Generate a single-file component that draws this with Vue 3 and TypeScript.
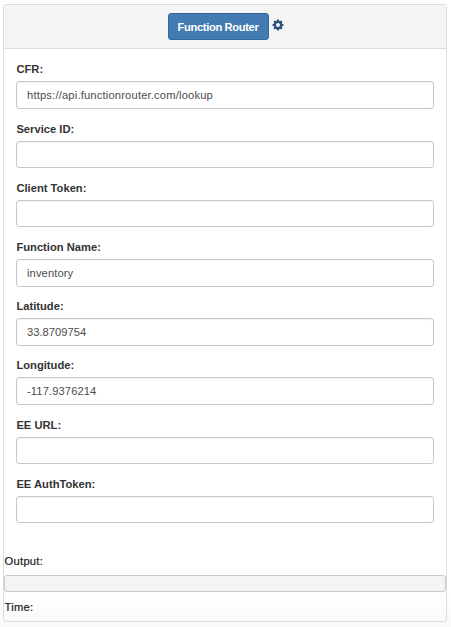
<script setup lang="ts">
import { ref } from 'vue'

interface Field {
  id: string
  label: string
  value: string
  /** Letter spacing of the value, in px */
  valueTrack: number
}

const fields = ref<Field[]>([
  { id: 'cfr', label: 'CFR:', value: 'https://api.functionrouter.com/lookup', valueTrack: 0.17 },
  { id: 'service-id', label: 'Service ID:', value: '', valueTrack: 0 },
  { id: 'client-token', label: 'Client Token:', value: '', valueTrack: 0 },
  { id: 'function-name', label: 'Function Name:', value: 'inventory', valueTrack: 0.1 },
  { id: 'latitude', label: 'Latitude:', value: '33.8709754', valueTrack: 0 },
  { id: 'longitude', label: 'Longitude:', value: '-117.9376214', valueTrack: 0.1 },
  { id: 'ee-url', label: 'EE URL:', value: '', valueTrack: 0 },
  { id: 'ee-auth-token', label: 'EE AuthToken:', value: '', valueTrack: 0 },
])
const teeth = [0, 45, 90, 135, 180, 225, 270, 315]
</script>

<template>
  <main class="page">
    <section class="panel">
      <header class="heading">
        <button class="btn" type="button">Function Router</button>
        <a class="settings" role="button">
          <svg viewBox="0 0 24 24" width="12" height="12">
            <circle cx="12" cy="12" r="6.2" fill="none" stroke="currentColor" stroke-width="4.4" />
            <path
              v-for="a in teeth"
              :key="a"
              d="M9.5 4.8 10.1 1.2H13.9L14.5 4.8Z"
              fill="currentColor"
              :transform="`rotate(${a} 12 12)`"
            />
          </svg>
        </a>
      </header>
      <form class="body" @submit.prevent>
        <div v-for="f in fields" :key="f.id" class="group">
          <label :for="f.id">{{ f.label }}</label>
          <input :id="f.id" v-model="f.value" type="text" :style="{ letterSpacing: f.valueTrack + 'px' }" />
        </div>
      </form>
      <div class="result">
        <p class="caption">Output:</p>
        <pre class="output"></pre>
        <p class="caption">Time:</p>
      </div>
    </section>
  </main>
</template>

<style>
body {
  background: #fff;
}
</style>

<style scoped>
* {
  box-sizing: border-box;
}
.page {
  height: 627px;
  padding: 4px 4px 5px 3px;
  font-family: "Liberation Sans", Arial, sans-serif;
  font-size: 11.2px;
  line-height: 16px;
  color: #333;
  background: linear-gradient(#fff 590px, #f9f9f9 627px);
}
.panel {
  height: 618px;
  border: 1px solid #ddd;
  border-radius: 3px;
}
.heading {
  display: flex;
  justify-content: center;
  align-items: flex-start;
  gap: 3px;
  height: 44px;
  padding-top: 8px;
  padding-left: 1px;
  border-bottom: 1px solid #ddd;
  border-radius: 2px 2px 0 0;
  background: #f4f4f4;
}
.btn {
  width: 101px;
  height: 27px;
  padding: 1px 0 0;
  border: 1px solid #34689a;
  border-radius: 3px;
  background: #427ab2;
  color: #fff;
  font: bold 11.2px/24px "Liberation Sans", Arial, sans-serif;
  letter-spacing: -0.37px;
  white-space: nowrap;
}
.settings {
  display: flex;
  padding-top: 5.5px;
  color: #28517a;
}
.body {
  padding: 12.45px 12px 0;
}
.group {
  margin-bottom: 11.7px;
}
label {
  display: block;
  width: max-content;
  margin-bottom: 4px;
  padding-left: 0.4px;
  font-weight: bold;
}
input {
  display: block;
  width: 418px;
  height: 27.5px;
  padding: 0 10px;
  border: 1px solid #c8c8c8;
  border-radius: 3px;
  background: #fff;
  box-shadow: inset 0 1px 1px rgba(0, 0, 0, 0.05);
  color: #4d4d4d;
  font: 11.2px/16px "Liberation Sans", Arial, sans-serif;
  outline: none;
}
.result {
  padding-top: 17.95px;
}
.caption {
  margin: 0;
  padding-left: 0.6px;
  width: max-content;
  color: #222;
  letter-spacing: 0.25px;
  -webkit-text-stroke: 0.2px #222;
}
.output {
  height: 17px;
  margin: 6px 0 7px;
  border: 1px solid #c8c8c8;
  border-radius: 3px;
  background: #f4f4f4;
}
</style>
